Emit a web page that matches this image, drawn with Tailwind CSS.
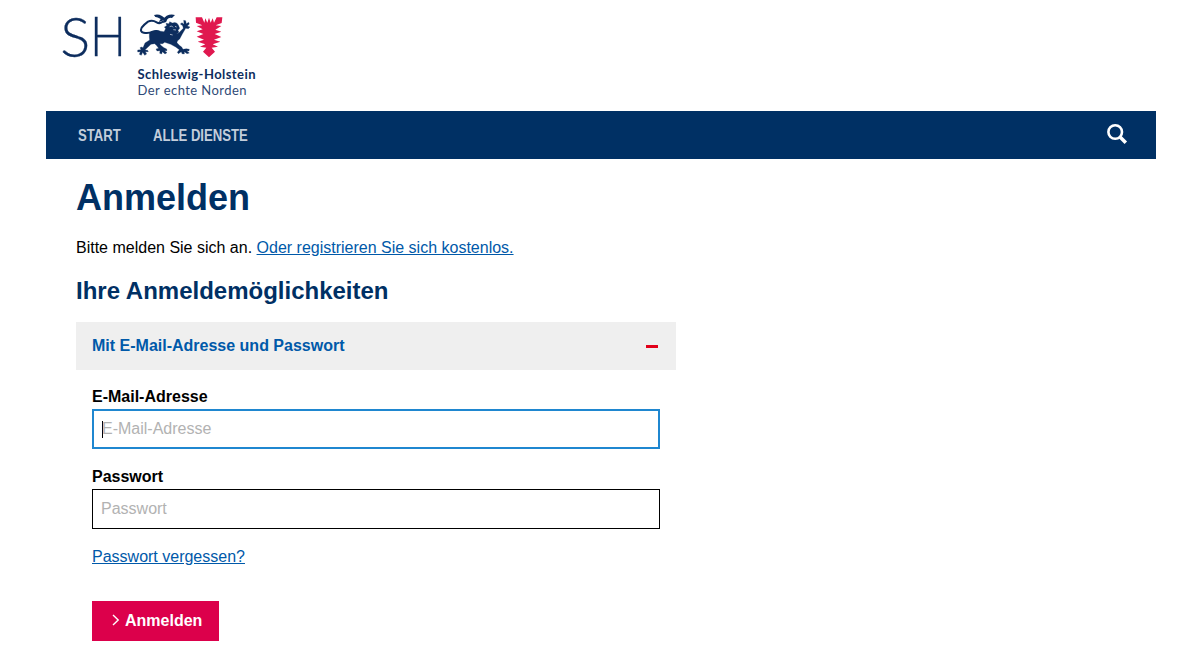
<!DOCTYPE html>
<html lang="de">
<head>
<meta charset="utf-8">
<title>Anmelden</title>
<script src="https://cdn.jsdelivr.net/npm/@tailwindcss/browser@4"></script>
</head>
<body class="bg-white text-black font-['Liberation_Sans',Arial,sans-serif] text-base leading-6 h-[655px] overflow-hidden">
<div class="ml-[46px] w-[1110px]">
  <header class="h-[111px]">
    <svg class="block" width="230" height="111" viewBox="46 0 230 111" role="img" aria-label="Schleswig-Holstein">
      <g fill="#0d2d5e" font-family="Lato, sans-serif">
        <text transform="translate(60.3 56.6) scale(1 1)" font-size="56" font-weight="300" stroke="#0d2d5e" stroke-width=".3">S</text>
        <text transform="translate(90 56.2) scale(.85 1)" font-size="56" font-weight="300" stroke="#0d2d5e" stroke-width=".3">H</text>
        <text x="137.5" y="79" font-size="13" font-weight="700" textLength="118" lengthAdjust="spacing">Schleswig-Holstein</text>
        <text x="137.5" y="95" font-size="13" font-weight="400" fill="#2f4a76" textLength="109" lengthAdjust="spacing">Der echte Norden</text>
      </g>
      <!-- Löwe -->
      <g transform="translate(130 8) scale(.33333)" fill="#0d2d5e">
        <path d="M72 21 Q84 17 96 24 L103 29 L110 23 Q122 18 135 21 L126 30 Q117 27 111 35 Q110 45 99 44 L100 37 Q94 40 86 42 L92 33 Q80 26 76 27Z"/>
        <path d="M100 40 Q90 49 80 43 Q67 35 54 41 Q43 49 35 59 Q29 72 41 74 Q55 77 68 71 Q79 67 88 71" fill="none" stroke="#0d2d5e" stroke-width="6"/>
        <path stroke="#0d2d5e" stroke-width=".8" stroke-linejoin="round" d="M58 76 Q72 64 88 69 L102 71 L107 62 L103 57 L110 53 L108 46 L117 47 L119 41 L127 45 Q140 40 145 51 L149 61 L144 67 L147 73 L139 77 L146 75 L160 61 L158 53 L151 48 L156 44 L162 49 L161 37 L167 38 L169 47 L176 43 L178 48 L172 54 L180 57 L175 62 L167 61 L157 78 L149 93 L142 99 L141 104 L148 112 L155 117 L159 124 L169 122 L178 124 L177 129 L170 128 L178 135 L171 137 L163 131 L163 138 L156 137 L154 131 L145 137 L142 133 L148 125 L137 117 L122 109 L104 103 L98 107 L89 107 L94 113 L102 119 L110 123 L111 128 L104 128 L111 134 L105 138 L97 131 L95 138 L89 136 L90 128 L81 129 L78 123 L86 121 L79 112 L74 107 L63 109 L51 120 L45 126 L53 127 L55 131 L46 131 L50 138 L44 142 L38 133 L34 142 L28 139 L31 131 L23 132 L23 126 L33 125 L30 119 L35 117 L39 119 L45 105 L59 96 L58 87Z"/>
        <path d="M119 56 L125 54 L129 58 M135 55 L140 57 M130 65 L138 66 M120 79 L128 81" stroke="white" stroke-width="1.8" fill="none"/>
      </g>
      <!-- Nesselblatt -->
      <path transform="translate(186 8) scale(.33333)" fill="#e0184f" d="M29 28 L48 28 L55 44 L58 31 L64 44 L69 29 L74 44 L80 31 L84 44 L92 28 L109 28 L107 45 L89 52 L106 54 L88 65 L106 71 L86 78 L106 87 L84 95 L103 101 L80 109 L96 116 L77 119 L87 131 L69 148 L51 131 L61 119 L42 116 L58 109 L35 101 L54 95 L32 86 L52 78 L32 70 L50 64 L32 54 L49 52 L30 44Z"/>
    </svg>
  </header>
  <nav class="flex h-12 items-center justify-between bg-[#003064] pl-8 pr-7 text-[#c3cddb]">
    <div class="flex pt-[2px] font-bold">
      <a class="block w-[74.5px] whitespace-nowrap"><span class="inline-block origin-left scale-x-[.82]">START</span></a>
      <a class="block w-[95px] whitespace-nowrap"><span class="inline-block origin-left scale-x-[.82]">ALLE DIENSTE</span></a>
    </div>
    <svg class="mb-[2px]" width="22" height="22" viewBox="0 0 22 22" fill="none" stroke="white"><circle cx="9.2" cy="9" r="6.8" stroke-width="2.6"/><path d="M13.8 13.8 L19.8 19.8" stroke-width="3.5"/></svg>
  </nav>
  <main class="ml-[30px] w-[600px]">
    <h1 class="pt-[17px] text-[36px] leading-[43px] font-bold text-[#003064]">Anmelden</h1>
    <p class="mt-[17px]">Bitte melden Sie sich an. <a class="text-[#0059a9] underline">Oder registrieren Sie sich kostenlos.</a></p>
    <h2 class="mt-4 text-[24px] leading-[29px] font-bold text-[#003064]">Ihre Anmeldemöglichkeiten</h2>
    <section class="mt-[17px]">
      <div class="flex h-12 items-center justify-between bg-[#efefef] px-4 font-bold text-[#0059a9]">
        <span>Mit E-Mail-Adresse und Passwort</span>
        <span class="mt-px mr-[2px] h-[3px] w-3 bg-[#e2001a]"></span>
      </div>
      <form class="px-4 pt-[15px]">
        <label class="block font-bold">E-Mail-Adresse</label>
        <div class="flex h-10 items-center border-2 border-[#1f87d0] px-2 text-[#b2b2b2]"><span class="h-[17px] w-px bg-black"></span><span class="-ml-px">E-Mail-Adresse</span></div>
        <label class="mt-4 block font-bold">Passwort</label>
        <div class="flex h-10 items-center border border-black px-2 text-[#b2b2b2]">Passwort</div>
        <a class="mt-4 block w-fit text-[#0059a9] underline">Passwort vergessen?</a>
        <button type="button" class="mt-8 flex h-10 w-[127px] items-center bg-[#dc004b] pl-5 font-bold text-white"><svg class="mr-[5px] mb-[2px]" width="8" height="12" viewBox="0 0 8 12" fill="none" stroke="white" stroke-width="1.4"><path d="M1 1 L6.2 6 L1 11"/></svg>Anmelden</button>
      </form>
    </section>
  </main>
</div>
</body>
</html>
